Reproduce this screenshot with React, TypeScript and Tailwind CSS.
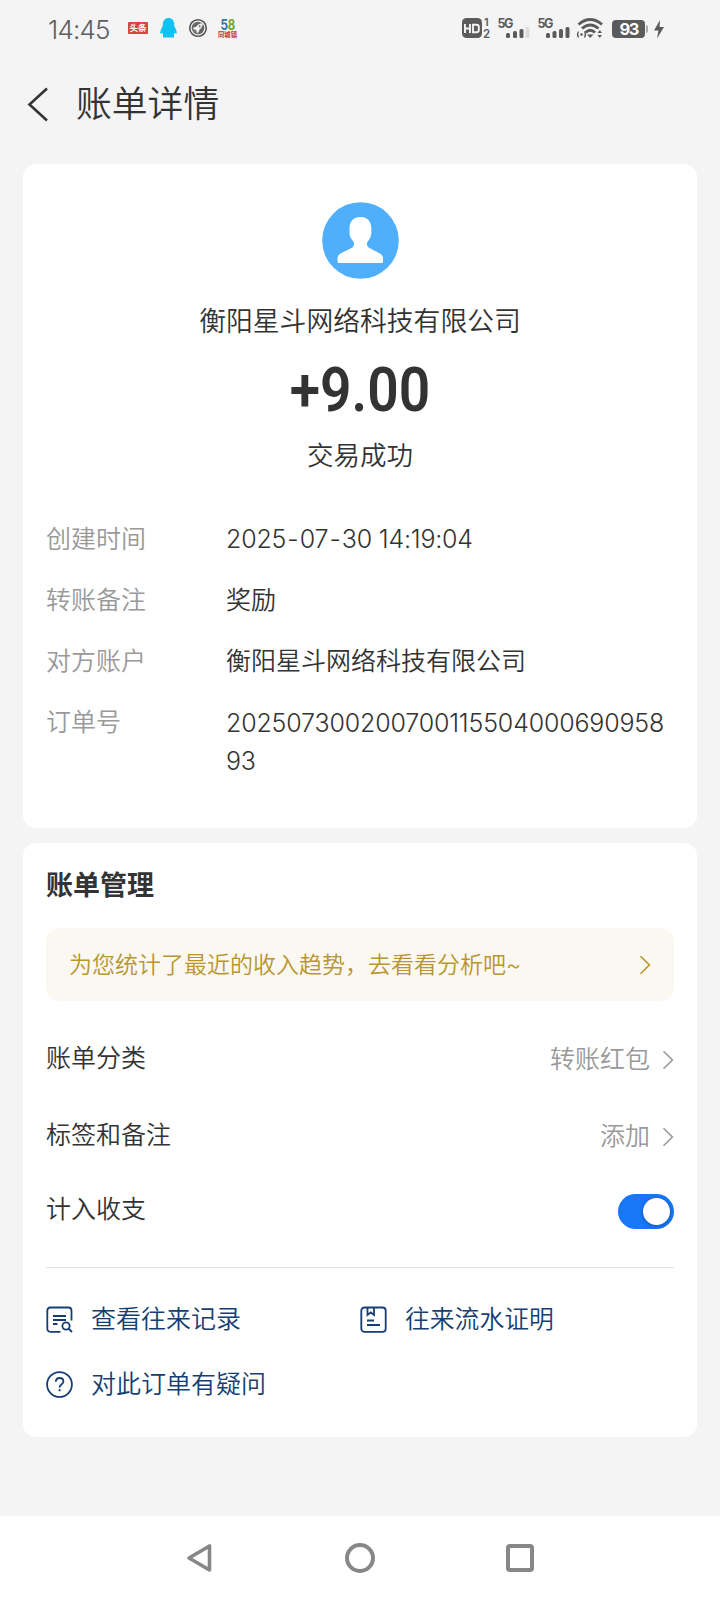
import React from "react";

type ChevronProps = { className?: string };

function Chevron({ className = "" }: ChevronProps) {
  return (
    <svg className={className} width="12" height="20" viewBox="0 0 12 20" fill="none" stroke="currentColor" strokeWidth="1.6">
      <path d="M1.5 1.2 10.4 10 1.5 18.8" />
    </svg>
  );
}

function StatusBar() {
  return (
    <div className="flex h-14 items-center pl-[48px]">
      <span className="mt-[3px] w-[80px] text-[26px] leading-[30px] font-[350] tracking-[-0.8px] text-[#5e5e5e]">14:45</span>
      <span className="flex h-[12px] w-[20px] items-center justify-center rounded-[1px] bg-[#d8453f] text-[8.5px] leading-none font-bold text-white">
        头条
      </span>
      <svg className="ml-[12px]" width="17" height="20" viewBox="0 0 17 20" fill="#0ec3f2">
        <path d="M8.5 0C5 0 3 2.600 2.800 6V8C1.200 10.500 .2 13 .2 15.600L3 15.300V19.500H14V15.300L16.800 15.600C16.800 13 15.800 10.500 14.200 8V6C14 2.600 12 0 8.500 0Z" />
      </svg>
      <svg className="ml-[11px]" width="20" height="20" viewBox="0 0 20 20" fill="none">
        <circle cx="10" cy="10" r="8.300" stroke="#555" strokeWidth="1.600" />
        <circle cx="10" cy="10" r="6.300" fill="#666" />
        <path d="M14.500 5.500C11.500 5.500 9.500 7 8.200 9L6 9.400 5.200 11.200 7.300 11.300 8.800 12.800 8.900 15 10.600 14 11 11.900C13 10.500 14.500 8.500 14.500 5.500ZM5.500 14.500 7.500 12.500" fill="#f4f4f4" stroke="#f4f4f4" strokeWidth=".4" />
        <circle cx="11.700" cy="8.300" r="1" fill="#666" />
      </svg>
      <svg className="ml-[9px]" width="22" height="22" viewBox="0 0 22 22" fontWeight="700">
        <text x="3.500" y="12.500" fontSize="14" fill="#2879a8" textLength="7.500" lengthAdjust="spacingAndGlyphs">5</text>
        <text x="10.800" y="12.500" fontSize="14" fill="#6ba52b" textLength="7.500" lengthAdjust="spacingAndGlyphs">8</text>
        <path d="M1 15H20" stroke="#e7a33a" strokeWidth="1.200" strokeDasharray="2 2.500" />
        <text x="1" y="19.800" fontSize="6.500" fill="#c5392b" textLength="19" lengthAdjust="spacingAndGlyphs">同城镇</text>
      </svg>
      <svg className="ml-[221px]" width="210" height="24" viewBox="0 0 210 24" fill="#5b5b5b">
        <rect x="2" y="2" width="20" height="20" rx="4.500" />
        <path d="M5 8V17M5 12.500H10M10 8V17M13 8.800H16.500Q18.800 8.800 18.800 11V14Q18.800 16.200 16.500 16.200H13Z" fill="none" stroke="#f4f4f4" strokeWidth="1.900" />
        <text x="24" y="10" fontSize="11" fontWeight="600">1</text>
        <text x="23" y="21.500" fontSize="11.500" fontWeight="600">2</text>
        <text x="37.500" y="11.500" fontSize="12.500" fontWeight="700" textLength="16">5G</text>
        <rect x="46" y="17" width="4" height="5" rx="1.500" />
        <rect x="53" y="15" width="4" height="7" rx="1.500" />
        <rect x="59.500" y="13" width="4" height="9" rx="1.500" />
        <rect x="65.500" y="11" width="4" height="11" rx="1.500" fill="#dcdcdc" />
        <text x="77.500" y="11.500" fontSize="12.500" fontWeight="700" textLength="16">5G</text>
        <rect x="86" y="17" width="4" height="5" rx="1.500" />
        <rect x="92.500" y="15" width="4" height="7" rx="1.500" />
        <rect x="99" y="13" width="4" height="9" rx="1.500" />
        <rect x="105.500" y="11" width="4" height="11" rx="1.500" />
        <g fill="none" stroke="#5b5b5b" strokeWidth="2.900">
          <path d="M118.500 8.500Q130.200-1.500 142 8.500" />
          <path d="M122 12.500Q130.200 5.500 138.500 12.500" />
          <path d="M125.500 16.500Q130.200 12 135 16.500" />
        </g>
        <path d="M127 18.500H133.500L130.200 22Z" />
        <circle cx="121.500" cy="18.500" r="1.300" />
        <path d="M118.500 15.500Q116.500 18.500 118.500 21.500M124.500 15.500Q126.500 18.500 124.500 21.500" fill="none" stroke="#5b5b5b" strokeWidth="1.200" />
        <path d="M137.500 17 139.800 14 142 17ZM137.500 19 139.800 22 142 19Z" />
        <rect x="152" y="4" width="33" height="18" rx="4" />
        <path d="M186 9Q188 9 188 11V15Q188 17 186 17Z" fill="#aaa" />
        <text x="159.500" y="19" fontSize="16.500" fontWeight="700" fill="#fff" textLength="20">93</text>
        <path d="M200 4 194 14.500H198.500L197 22.500 204 11H199.500Z" />
      </svg>
    </div>
  );
}

function DetailRow({ label, children }: { label: string; children: React.ReactNode }) {
  return (
    <div className="flex text-[25px] leading-[38px]">
      <span className="w-[180px] shrink-0 text-[#999]">{label}</span>
      <span className="min-w-0 flex-1 text-[#333]">{children}</span>
    </div>
  );
}

function Bill() {
  return (
    <section className="mx-[23px] flex h-[664px] flex-col items-center rounded-[13px] bg-white px-[23px] pt-[38px]">
      <svg width="77" height="77" viewBox="0 0 77 77">
        <circle cx="38.500" cy="38.500" r="38.300" fill="#50affb" />
        <path d="M38.500 15C31.500 15 27.500 19.500 27.500 26V31C27.500 35 29.500 37 31.300 39.500 32.800 42 32 44.500 29.500 46L20.500 50.500C16.500 52.500 15.500 54 15.500 57V59.500Q15.500 61 17 61H59.500Q61 61 61 59.500V57C61 54 60 52.500 56 50.500L47.500 46C45 44.500 44.200 42 45.700 39.500 47.500 37 49.300 35 49.300 31V26C49.300 19.500 45.500 15 38.500 15Z" fill="#fff" />
      </svg>
      <p className="mt-[22px] text-[26.8px] leading-[40px] text-[#333]">衡阳星斗网络科技有限公司</p>
      <p className="mt-[19px] scale-x-[0.89] font-[Roboto] text-[62px] leading-[60px] font-semibold text-[#333]">+9.00</p>
      <p className="mt-[15px] text-[26.5px] leading-[40px] text-[#333]">交易成功</p>
      <div className="mt-[45px] flex w-full flex-col gap-[23px]">
        <DetailRow label="创建时间">
          <span className="tracking-[-0.2px]">
            2025<span className="px-[1.2px]">-</span>07<span className="px-[1.2px]">-</span>30 14:19:04
          </span>
        </DetailRow>
        <DetailRow label="转账备注">奖励</DetailRow>
        <DetailRow label="对方账户">衡阳星斗网络科技有限公司</DetailRow>
        <DetailRow label="订单号">
          <span className="relative top-px tracking-[-0.17px]">
            202507300200700115504000690958
            <br />
            93
          </span>
        </DetailRow>
      </div>
    </section>
  );
}

function SettingRow({ label, value }: { label: string; value: string }) {
  return (
    <div className="flex h-[40px] items-center text-[25px] leading-[40px]">
      <span className="flex-1 text-[#333]">{label}</span>
      <span className="mt-[2px] text-[#999]">{value}</span>
      <Chevron className="mt-[4px] ml-[12px] text-[#999]" />
    </div>
  );
}

function Management() {
  return (
    <section className="mx-[23px] mt-[15px] h-[594px] rounded-[13px] bg-white px-[23px] pt-[23px]">
      <h2 className="text-[27px] leading-[40px] font-bold text-[#333]">账单管理</h2>
      <div className="mt-[22px] flex h-[73px] items-center rounded-[14px] bg-[#fbf8f2] pr-[23px] pl-[23px] text-[#b8952f]">
        <span className="mt-px flex-1 text-[23px]">为您统计了最近的收入趋势，去看看分析吧~</span>
        <Chevron />
      </div>
      <div className="mt-[37px] flex flex-col">
        <SettingRow label="账单分类" value="转账红包" />
        <div className="mt-[37px]">
          <SettingRow label="标签和备注" value="添加" />
        </div>
        <div className="mt-[34px] flex h-[40px] items-center text-[25px] leading-[40px] text-[#333]">
          <span className="flex-1">计入收支</span>
          <span className="mt-[5px] flex h-[35px] w-[56px] items-center justify-end rounded-full bg-[#1777f7] pr-[4px]">
            <span className="size-[27px] rounded-full bg-white shadow-[0_1px_4px_rgba(0,0,0,0.3)]" />
          </span>
        </div>
      </div>
      <div className="mt-[38px] h-px bg-[#e3e3e3]" />
      <div className="mt-[31px] grid grid-cols-2 gap-y-[25px] text-[25px] leading-[40px] text-[#163e72]">
        <div className="flex items-center">
          <svg width="27" height="27" viewBox="0 0 27 27" fill="none" stroke="currentColor" strokeWidth="1.800">
            <path d="M14.500 25.800H4.500Q1.300 25.800 1.300 22.600V4.700Q1.300 1.500 4.500 1.500H22.300Q25.500 1.500 25.500 4.700V14.500M7 10H20M7 14H20M7 18H11.500" />
            <circle cx="20" cy="20" r="3.600" />
            <path d="M22.500 22.500 26 26" />
          </svg>
          <span className="ml-[18px]">查看往来记录</span>
        </div>
        <div className="flex items-center">
          <svg width="27" height="27" viewBox="0 0 27 27" fill="none" stroke="currentColor" strokeWidth="1.800">
            <rect x="1.300" y="1.500" width="24.400" height="24.400" rx="3.200" />
            <path d="M7.500 1.500V9L10.800 6.500 14 9V1.500M7 14.500H14M7 19H20" />
          </svg>
          <span className="ml-[18px] text-[24.8px]">往来流水证明</span>
        </div>
        <div className="flex items-center">
          <svg width="27" height="27" viewBox="0 0 27 27" fill="none" stroke="currentColor" strokeWidth="1.800">
            <circle cx="13.500" cy="13.500" r="12.400" />
            <path d="M9.800 10.800C9.800 8.500 11.300 7 13.600 7S17.400 8.500 17.400 10.500C17.400 13.300 13.600 13.300 13.600 16.500M13.600 18V20.300" />
          </svg>
          <span className="ml-[18px]">对此订单有疑问</span>
        </div>
      </div>
    </section>
  );
}

export default function App() {
  return (
    <div className="flex h-[1600px] w-[720px] flex-col bg-[#f4f4f4] font-[Inter,'Noto_Sans_CJK_SC',sans-serif] font-[350]">
      <StatusBar />
      <header className="flex h-[108px] items-start pt-[22px] pl-[27px]">
        <svg className="mt-[9px]" width="22" height="36" viewBox="0 0 22 36" fill="none" stroke="#333" strokeWidth="2.600">
          <path d="M20 1.500 2.500 17.500 20 33.500" />
        </svg>
        <h1 className="ml-[27px] text-[35.800px] leading-[52px] text-[#333]">账单详情</h1>
      </header>
      <Bill />
      <Management />
      <nav className="mt-auto flex h-[84px] items-center justify-center gap-[128px] bg-white">
        <svg width="32" height="32" viewBox="0 0 32 32" fill="none" stroke="#878787" strokeWidth="3.600" strokeLinejoin="round">
          <path d="M25.500 4V28L5 16Z" />
        </svg>
        <svg width="32" height="32" viewBox="0 0 32 32" fill="none" stroke="#878787" strokeWidth="4">
          <circle cx="16" cy="16" r="13" />
        </svg>
        <svg width="32" height="32" viewBox="0 0 32 32" fill="none" stroke="#878787" strokeWidth="4">
          <rect x="4" y="4" width="24" height="24" rx="2" />
        </svg>
      </nav>
    </div>
  );
}
